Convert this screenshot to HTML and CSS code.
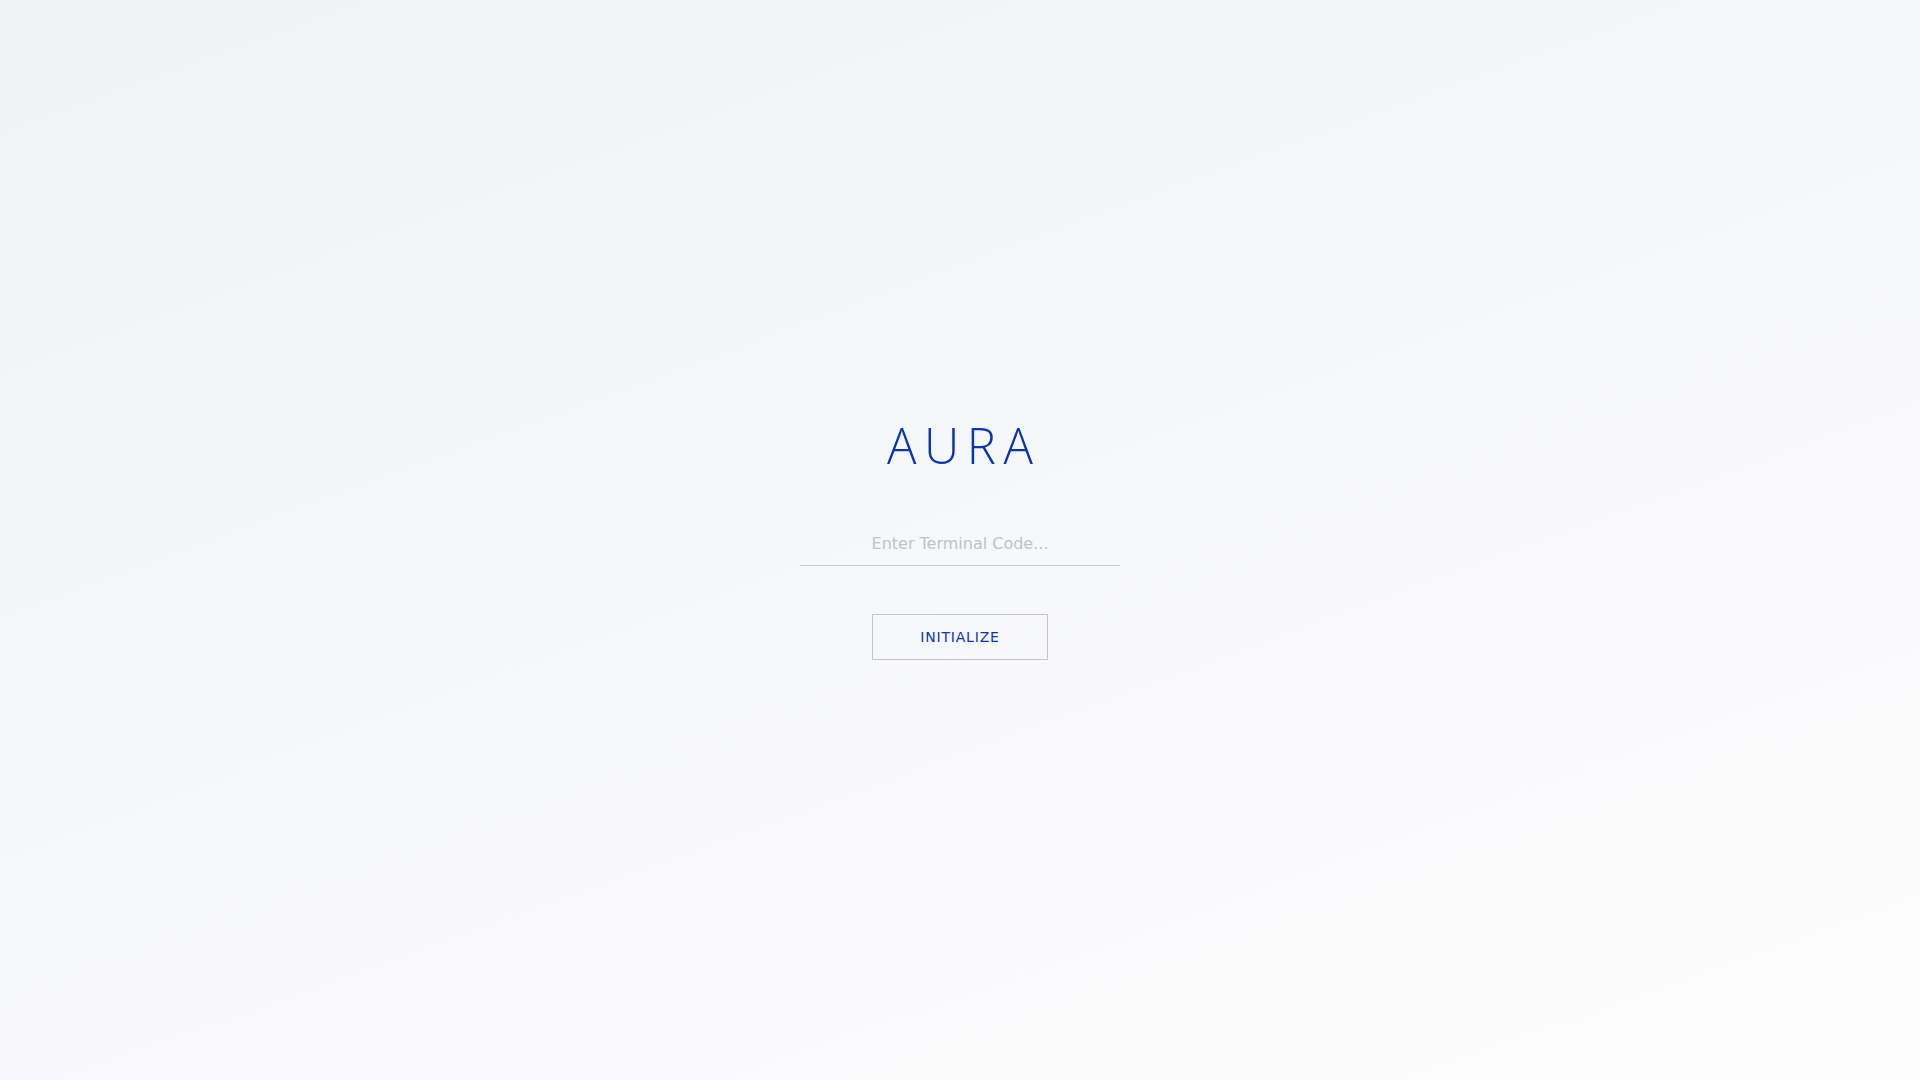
FILE: index.html
```html
<!DOCTYPE html>
<html lang="en">
<head>
<meta charset="utf-8">
<title>AURA</title>
<link rel="stylesheet" href="styles.css">
</head>
<body>
<main class="screen">
  <form class="login" onsubmit="return false;">
    <h1 class="brand">AURA</h1>
    <input class="code-input" type="text" placeholder="Enter Terminal Code...">
    <button class="init-btn" type="submit">INITIALIZE</button>
  </form>
</main>
</body>
</html>
```
FILE: styles.css
```css
html, body {
  margin: 0;
  padding: 0;
  height: 100%;
}
body {
  background: linear-gradient(160deg, #f1f2f5 0%, #f6f7f9 45%, #fdfdfe 100%);
  font-family: "DejaVu Sans", sans-serif;
}
.screen {
  height: 100vh;
  display: flex;
  align-items: center;
  justify-content: center;
}
.login {
  display: flex;
  flex-direction: column;
  align-items: center;
}
.brand {
  margin: 0 -0.155em 56px 0;
  font-family: "Open Sans", sans-serif;
  font-weight: 300;
  font-size: 49px;
  line-height: 1;
  letter-spacing: 0.155em;
  color: #0a36ad;
}
.code-input {
  width: 320px;
  box-sizing: border-box;
  padding: 8px 0 12px;
  border: none;
  border-bottom: 1px solid #c8c8c8;
  background: transparent;
  text-align: center;
  font-family: "DejaVu Sans", sans-serif;
  font-size: 16px;
  color: #333;
  outline: none;
  margin-bottom: 48px;
}
.code-input::placeholder {
  color: #c2c2c2;
}
.init-btn {
  width: 176px;
  height: 46px;
  border: 1px solid #c6c6c6;
  background: transparent;
  font-family: "DejaVu Sans", sans-serif;
  font-size: 14px;
  letter-spacing: 0.8px;
  color: #0a36ad;
  cursor: pointer;
}
```
